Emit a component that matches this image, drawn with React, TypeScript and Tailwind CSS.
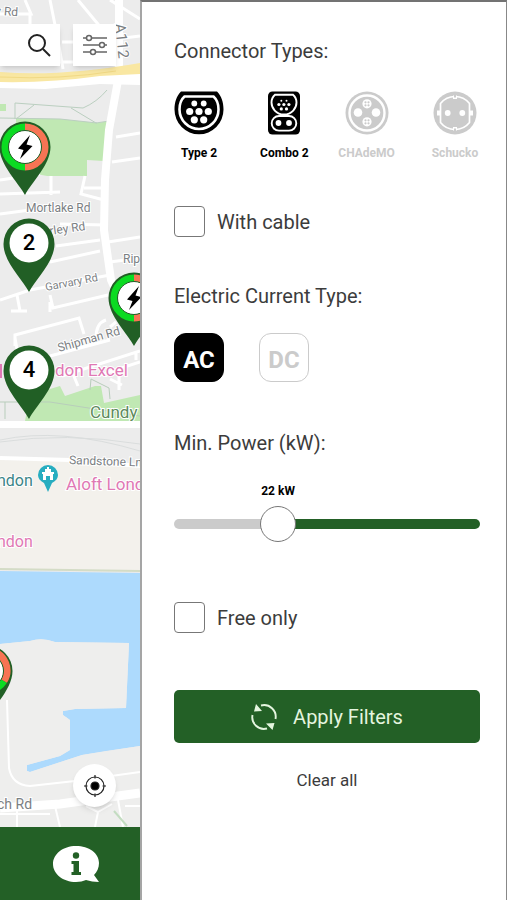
import { useState } from 'react';
import type { CSSProperties, ReactNode } from 'react';

function MapCanvas() {
  return (
    <svg
      viewBox="0 0 140 827"
      preserveAspectRatio="xMinYMin slice"
      className="absolute inset-0 h-full w-full"
      fontFamily="Roboto, sans-serif"
      aria-label="Map of the Royal Docks"
    >
      <rect width="140" height="827" fill="#ececec" />

      {/* parks */}
      <path d="M0 104H6V111H0ZM16 118L60 119L97 123L109 121L104 161L87 160V176H47L16 170Z" fill="#c0e8b3" />
      <path d="M30 395L60 386L65 396L95 386L101 386L104 403L140 395V421H25Z" fill="#c0e8b3" />
      <path d="M15 119V103L83 108Q97 102 107 90M16 119L34 105M71 108L96 123L109 121M0 118L60 119L97 123" fill="none" stroke="#bbcfc0" />
      <path d="M90 390L91 379L109 388L110 399M0 402L50 402L140 416M5 402V419" fill="none" stroke="#b8cdbb" />

      {/* streets */}
      <g fill="none" stroke="#fff" strokeWidth="3">
        <path d="M25 0L31 14H0M30 14V24M50 0L57 35L63 69M78 0L102 29M110 0L140 19M62 42H75M116 39L140 36M60 62L75 62" />
        <path d="M116 137L140 133M112 162L140 158M0 180L40 174M0 194L60 192M51 176V195M85 176L81 194L104 200M84 188H108" />
        <path d="M60 224L106 225M50 262L100 251M0 214L30 210M56 246L100 240M108 242L140 237M110 262L140 258" />
        <path d="M0 300L30 290L110 275M17 295L20 311M11 311H27M50 295L53 308L108 295M50 302V312M15 346V335L79 318L84 334M15 338L18 355M50 356L110 340M96 338Q96 323 106 320M110 327L116 322M62 376L140 351M73 374L78 386M100 375L140 362M110 379L122 385M119 371V390M136 351V360" />
      </g>
      <path d="M119 0V75L109 130L105 180L104 230L111 280L120 300" fill="none" stroke="#fff" strokeWidth="8" />

      {/* A-road across the top */}
      <path d="M0 78L60 79L110 70L140 69V85L100 84L45 89L0 88Z" fill="#fff" />
      <path d="M0 72Q60 77 140 63V74L100 76Q50 83 0 82Z" fill="#f9e7a2" />
      <path d="M0 77Q60 80 116 71" fill="none" stroke="#f1d985" />

      {/* railway and dock road */}
      <path d="M0 421H140V428H0Z" fill="#fff" />
      <path d="M0 440Q60 427 140 451M0 442Q65 432 140 444" fill="none" stroke="#dadddd" />
      <path d="M0 460L70 461L140 468V572L0 568Z" fill="#f3f1ec" />
      <path d="M0 458L70 460L140 466" fill="none" stroke="#fff" strokeWidth="4" />

      {/* docks */}
      <path d="M0 571L140 573V746L106 751L82 755L30 772L27 771V765L60 756L70 750V720L63 715V711L75 709L126 708L129 643L55 642Q42 637 30 641L0 644Z" fill="#addafd" />
      <path d="M0 569L140 571" stroke="#d4dcc6" strokeWidth="2" />
      <path d="M0 644L30 641Q42 637 55 642L129 643L126 708L75 709L63 711V715L70 720V750L60 756L27 765V771L30 772L82 755L140 746V827H0Z" fill="#eeeeed" />
      <path d="M7 700L9 768Q12 785 30 786L75 781L140 772" fill="none" stroke="#fff" strokeWidth="2" />
      <path d="M0 808L60 804L140 793" fill="none" stroke="#fff" strokeWidth="9" />
      <path d="M0 814H50M17 811V827M55 806L60 827M86 806L98 812L95 827M98 812L112 804M118 800L123 827M125 806H140" fill="none" stroke="#fff" strokeWidth="2" />
      <path d="M114 811L127 826" stroke="#c3dcc1" strokeWidth="2" />

      {/* labels */}
      <g stroke="#fff" strokeWidth="2" paintOrder="stroke" fill="#7b8083" fontSize="11">
        <text x="-5" y="15" fontSize="12" transform="rotate(4 0 15)">y Rd</text>
        <text x="115" y="24" fontSize="15" transform="rotate(84 115 24)">A112</text>
        <text x="26" y="212" fontSize="12">Mortlake Rd</text>
        <text x="50" y="235" fontSize="12" transform="rotate(-8 50 235)">rley Rd</text>
        <text x="46" y="291" transform="rotate(-11 46 291)">Garvary Rd</text>
        <text x="59" y="352" fontSize="12" transform="rotate(-16 59 352)">Shipman Rd</text>
        <text x="123" y="263" fontSize="12">Rip</text>
        <text x="69" y="464" fontSize="12" transform="rotate(2 69 464)">Sandstone Ln</text>
        <text x="-3" y="809" fontSize="14">ch Rd</text>
        <text x="55" y="376" fontSize="17" fill="#df78b4">don Excel</text>
        <text x="90" y="418" fontSize="17" fill="#5c8a5c">Cundy</text>
        <text x="-3" y="486" fontSize="16" fill="#3a8588">ndon</text>
        <text x="66" y="490" fontSize="17" fill="#df78b4">Aloft Lond</text>
        <text x="-3" y="547" fontSize="16" fill="#df78b4">ndon</text>
      </g>
      <path d="M1 364V378" stroke="#df78b4" strokeWidth="2" />

      {/* landmark */}
      <path d="M48 492L44 483C40 481 38 478 38 475A10 10 0 0 1 58 475C58 478 56 481 52 483Z" fill="#27adc0" />
      <path d="M43 480V474H42V472H45V469H47V467H49V469H51V472H54V474H53V480H50V476H46V480Z" fill="#fff" />
    </svg>
  );
}

const PIN = 'M26 74C20 62 .5 44 .5 26A25.500 25.500 0 0 1 51.500 26C51.500 44 32 62 26 74Z';
const BOLT = 'M31 14L19 27.500L24.500 29L21 38L33.500 25L27.500 23.500Z';

function CountPin({ count, place }: { count: number; place: string }) {
  return (
    <button type="button" aria-label={`${count} charging stations`} className={`absolute h-[75px] w-[52px] ${place}`}>
      <svg viewBox="0 0 52 75" className="h-full w-full">
        <path d={PIN} fill="#215f25" />
        <circle cx="26" cy="25" r="19.500" fill="#fff" />
        <text x="26" y="32" textAnchor="middle" fontFamily="Roboto, sans-serif" fontSize="22" fontWeight="500">
          {count}
        </text>
      </svg>
    </button>
  );
}

function StationPin({ place, free, busy }: { place: string; free: string; busy: string }) {
  return (
    <button type="button" aria-label="Charging station" className={`absolute h-[75px] w-[52px] ${place}`}>
      <svg viewBox="0 0 52 75" className="h-full w-full">
        <path d={PIN} fill="#215f25" />
        <path d={free} fill="none" stroke="#0bdb22" strokeWidth="7" />
        <path d={busy} fill="none" stroke="#f77454" strokeWidth="7" />
        <circle cx="26" cy="26" r="16.500" fill="#fff" stroke="#215f25" />
        <path d={BOLT} fill="#000" />
      </svg>
    </button>
  );
}

function Type2Icon() {
  return (
    <svg viewBox="0 0 50 44" className="h-[44px] w-[50px]">
      <path d="M7 .5H43C47.500 5 49.500 11 49.500 18.500A24.500 24.800 0 0 1 .5 18.500C.5 11 2.500 5 7 .5Z" fill="currentColor" />
      <path d="M10.500 5.500H39.500C43.500 9 44.500 13.500 44.500 18.500A19.500 19.500 0 0 1 5.500 18.500C5.500 13.500 6.500 9 10.500 5.500Z" fill="none" stroke="#fff" strokeWidth="2.600" />
      <g fill="#fff">
        <circle cx="20.300" cy="12.500" r="2.900" />
        <circle cx="29.700" cy="12.500" r="2.900" />
        <circle cx="15.700" cy="20.500" r="3.600" />
        <circle cx="25" cy="20.500" r="3.600" />
        <circle cx="34.300" cy="20.500" r="3.600" />
        <circle cx="20.300" cy="28.800" r="3.600" />
        <circle cx="29.700" cy="28.800" r="3.600" />
      </g>
    </svg>
  );
}

function Combo2Icon() {
  return (
    <svg viewBox="0 0 32 44" className="h-[44px] w-[32px]">
      <rect y=".5" width="32" height="43" rx="4.500" fill="currentColor" />
      <g fill="none" stroke="#fff" strokeWidth="1.900">
        <path d="M7 3.800H25C27.500 6 28.500 8.500 28.500 11.500C28.500 17 24 23.500 16 23.500S3.500 17 3.500 11.500C3.500 8.500 4.500 6 7 3.800Z" />
        <rect x="3.700" y="25" width="24.600" height="14.600" rx="7.300" />
      </g>
      <g fill="#fff">
        <circle cx="13.300" cy="9.700" r="1" />
        <circle cx="18.500" cy="9.700" r="1" />
        <circle cx="10.900" cy="13.500" r="1.600" />
        <circle cx="15.900" cy="13.500" r="1.600" />
        <circle cx="20.900" cy="13.500" r="1.600" />
        <circle cx="13.300" cy="17.900" r="1.600" />
        <circle cx="18.500" cy="17.900" r="1.600" />
        <circle cx="10.500" cy="32" r="2.900" />
        <circle cx="21" cy="32" r="2.900" />
      </g>
    </svg>
  );
}

function ChademoIcon() {
  return (
    <svg viewBox="0 0 44 44" className="size-[44px]">
      <circle cx="22" cy="22" r="21.500" fill="currentColor" />
      <circle cx="22" cy="22" r="17.500" fill="none" stroke="#fff" strokeWidth="2.400" />
      <g fill="#fff">
        <circle cx="13" cy="21.500" r="4.300" />
        <circle cx="31" cy="21.500" r="4.300" />
        <circle cx="22" cy="12.800" r="4.600" />
        <circle cx="22" cy="30.800" r="4.600" />
      </g>
      <g fill="currentColor">
        <circle cx="20.500" cy="11.300" r="1.100" />
        <circle cx="23.500" cy="11.300" r="1.100" />
        <circle cx="20.500" cy="14.300" r="1.100" />
        <circle cx="23.500" cy="14.300" r="1.100" />
        <circle cx="20.500" cy="29.300" r="1.100" />
        <circle cx="23.500" cy="29.300" r="1.100" />
        <circle cx="20.500" cy="32.300" r="1.100" />
        <circle cx="23.500" cy="32.300" r="1.100" />
      </g>
    </svg>
  );
}

function SchuckoIcon() {
  return (
    <svg viewBox="0 0 44 44" className="size-[44px]">
      <circle cx="22" cy="22" r="21.500" fill="currentColor" />
      <path
        d="M7.500 12.500Q13 5.500 22 5.500T36.500 12.500V31.500Q31 38.500 22 38.500T7.500 31.500Z"
        fill="none"
        stroke="#fff"
        strokeWidth="1.700"
      />
      <path d="M4 19.500H7.500V24.500H4ZM36.500 19.500H40V24.500H36.500Z" fill="#fff" />
      <path d="M20 4.500H24V8H20ZM20 36H24V39.500H20Z" fill="#fff" />
      <path d="M21 4H23V6.500H21ZM21 37.500H23V40H21Z" fill="currentColor" />
      <circle cx="14.700" cy="22" r="2.900" fill="#fff" />
      <circle cx="29.300" cy="22" r="2.900" fill="#fff" />
    </svg>
  );
}

const connectors: { name: string; icon: ReactNode }[] = [
  { name: 'Type 2', icon: <Type2Icon /> },
  { name: 'Combo 2', icon: <Combo2Icon /> },
  { name: 'CHAdeMO', icon: <ChademoIcon /> },
  { name: 'Schucko', icon: <SchuckoIcon /> },
];

function Heading({ children }: { children: ReactNode }) {
  return <h2 className="text-[20px] leading-7 whitespace-nowrap">{children}</h2>;
}

function CheckRow({ label }: { label: string }) {
  return (
    <label className="flex w-fit items-center gap-3 text-[20px] leading-7">
      <input
        type="checkbox"
        className="size-[31px] appearance-none rounded-[4px] border border-[#777] bg-white checked:bg-[#236026]"
      />
      {label}
    </label>
  );
}

function PowerSlider() {
  const [power, setPower] = useState(22);
  const max = 69;
  const position = `calc(18px + (100% - 36px) * ${power / max})`;
  return (
    <div className="relative mt-[26px] pt-[23px]">
      <output
        htmlFor="power"
        className="absolute top-0 -translate-x-1/2 text-[12px] leading-4 font-bold whitespace-nowrap text-black"
        style={{ left: position }}
      >
        {power} kW
      </output>
      <input
        id="power"
        type="range"
        aria-label="Min. Power (kW)"
        min={0}
        max={max}
        value={power}
        onChange={(e) => setPower(Number(e.target.value))}
        className="block h-9 w-full appearance-none bg-transparent [&::-webkit-slider-runnable-track]:h-[10px] [&::-webkit-slider-runnable-track]:rounded-full [&::-webkit-slider-runnable-track]:bg-[image:var(--track)] [&::-webkit-slider-thumb]:-mt-[13px] [&::-webkit-slider-thumb]:size-9 [&::-webkit-slider-thumb]:appearance-none [&::-webkit-slider-thumb]:rounded-full [&::-webkit-slider-thumb]:border [&::-webkit-slider-thumb]:border-[#777] [&::-webkit-slider-thumb]:bg-white"
        style={{ '--track': `linear-gradient(to right, #cbcbcb ${position}, #236026 ${position})` } as CSSProperties}
      />
    </div>
  );
}

export default function App() {
  const [selected, setSelected] = useState(['Type 2', 'Combo 2', 'AC']);
  const toggle = (name: string) =>
    setSelected((s) => (s.includes(name) ? s.filter((n) => n !== name) : [...s, name]));

  return (
    <div className="flex min-h-screen bg-white font-[Roboto,sans-serif] text-[#3c3c3c]">
      <section className="flex w-[140px] shrink-0 flex-col overflow-hidden">
        <div className="relative flex flex-1 flex-col justify-between overflow-hidden">
          <MapCanvas />
          <StationPin place="top-[121px] left-[-1px]" free="M26 46A20 20 0 0 1 26 6" busy="M26 6A20 20 0 0 1 26 46" />
          <CountPin place="top-[218px] left-[3px]" count={2} />
          <StationPin place="top-[272px] left-[108px]" free="M26 46A20 20 0 0 1 26 6" busy="M26 6A20 20 0 0 1 26 46" />
          <CountPin place="top-[345px] left-[3px]" count={4} />
          <StationPin place="top-[645px] left-[-39px]" free="M43 36A20 20 0 0 1 6 26" busy="M6 26A20 20 0 1 1 43 36" />
          <div className="relative mt-6 flex gap-[13px]">
            <button type="button" aria-label="Search" className="flex h-[42px] w-[60px] items-center justify-end bg-white pr-2 shadow-md">
              <svg viewBox="0 0 26 26" className="size-[26px]" fill="none" stroke="#222" strokeWidth="2">
                <circle cx="11" cy="11" r="8" />
                <path d="M17 17L24 24" />
              </svg>
            </button>
            <button type="button" aria-label="Filters" className="flex h-[42px] w-[43px] items-center justify-center bg-white shadow-md">
              <svg viewBox="0 0 26 24" className="h-6 w-[26px]" fill="#fff" stroke="#666" strokeWidth="1.500">
                <path d="M1 5H25M1 12H25M1 19H25" />
                <circle cx="7" cy="5" r="2.500" />
                <circle cx="20" cy="12" r="2.500" />
                <circle cx="11" cy="19" r="2.500" />
              </svg>
            </button>
          </div>
          <button
            type="button"
            aria-label="Show my location"
            className="relative mr-6 mb-5 flex size-[43px] items-center justify-center self-end rounded-full bg-white shadow-md"
          >
            <svg viewBox="0 0 24 24" className="size-6" fill="none" stroke="#222" strokeWidth="1.200">
              <circle cx="12" cy="12" r="9" />
              <path d="M12 1V4.500M12 19.500V23M1 12H4.500M19.500 12H23" />
              <circle cx="12" cy="12" r="4" fill="#000" />
            </svg>
          </button>
        </div>
        <nav className="flex h-[73px] items-center justify-end bg-[#236026] pr-10">
          <button type="button" aria-label="Information">
            <svg viewBox="0 0 48 38" className="h-[38px] w-12">
              <path d="M24 1C37 1 47 8 47 18C47 23 45 27 42 30L47 37C42 37 38 36 34 35C31 36 28 37 24 37C11 37 1 29 1 19S11 1 24 1Z" fill="#fff" />
              <circle cx="24" cy="10.500" r="3.200" fill="#236026" />
              <path d="M19.500 16H27V27H29V30H19.500V27H21.500V19H19.500Z" fill="#236026" />
            </svg>
          </button>
        </nav>
      </section>

      <main className="min-w-0 flex-1 border-t-2 border-r border-l-2 border-t-[#737373] border-r-[#888] border-l-[#a5a5a5] pt-[35px] pr-[26px] pb-8 pl-8">
        <Heading>Connector Types:</Heading>
        <div className="mt-[26px] grid grid-cols-[28fr_27fr_29fr_50px]">
          {connectors.map(({ name, icon }) => (
            <button
              key={name}
              type="button"
              aria-pressed={selected.includes(name)}
              onClick={() => toggle(name)}
              className="flex w-[50px] flex-col items-center gap-[10px] text-[#cbcbcb] aria-pressed:text-black"
            >
              {icon}
              <span className="text-[12px] leading-4 font-bold whitespace-nowrap">{name}</span>
            </button>
          ))}
        </div>
        <div className="mt-[45px]">
          <CheckRow label="With cable" />
        </div>

        <div className="mt-[45px]">
          <Heading>Electric Current Type:</Heading>
        </div>
        <div className="mt-[23px] flex gap-[35px]">
          {['AC', 'DC'].map((name) => (
            <button
              key={name}
              type="button"
              aria-pressed={selected.includes(name)}
              onClick={() => toggle(name)}
              className="h-[49px] w-[50px] rounded-[12px] border border-[#cbcbcb] pt-[4px] text-[24px] leading-7 font-bold text-[#cbcbcb] aria-pressed:border-black aria-pressed:bg-black aria-pressed:text-white"
            >
              {name}
            </button>
          ))}
        </div>

        <div className="mt-[47px]">
          <Heading>Min. Power (kW):</Heading>
        </div>
        <PowerSlider />
        <div className="mt-[60px]">
          <CheckRow label="Free only" />
        </div>

        <button
          type="button"
          className="mt-[57px] flex h-[53px] w-full items-center justify-center gap-4 rounded-[5px] bg-[#236026] text-[20px] leading-7 text-[#e4f5df]"
        >
          <svg viewBox="0 0 26 26" className="size-[26px]" fill="none" stroke="currentColor" strokeWidth="1.900">
            <path d="M10 1.500A11.700 11.700 0 0 1 24.500 15M16 24.500A11.700 11.700 0 0 1 1.500 11" />
            <path d="M5 0L11 7L3 7.500Z M21.500 26L15 19.500L23.500 19Z" fill="currentColor" stroke="none" />
          </svg>
          Apply Filters
        </button>
        <button type="button" className="mx-auto mt-[25px] block text-[17px] leading-6">
          Clear all
        </button>
      </main>
    </div>
  );
}
